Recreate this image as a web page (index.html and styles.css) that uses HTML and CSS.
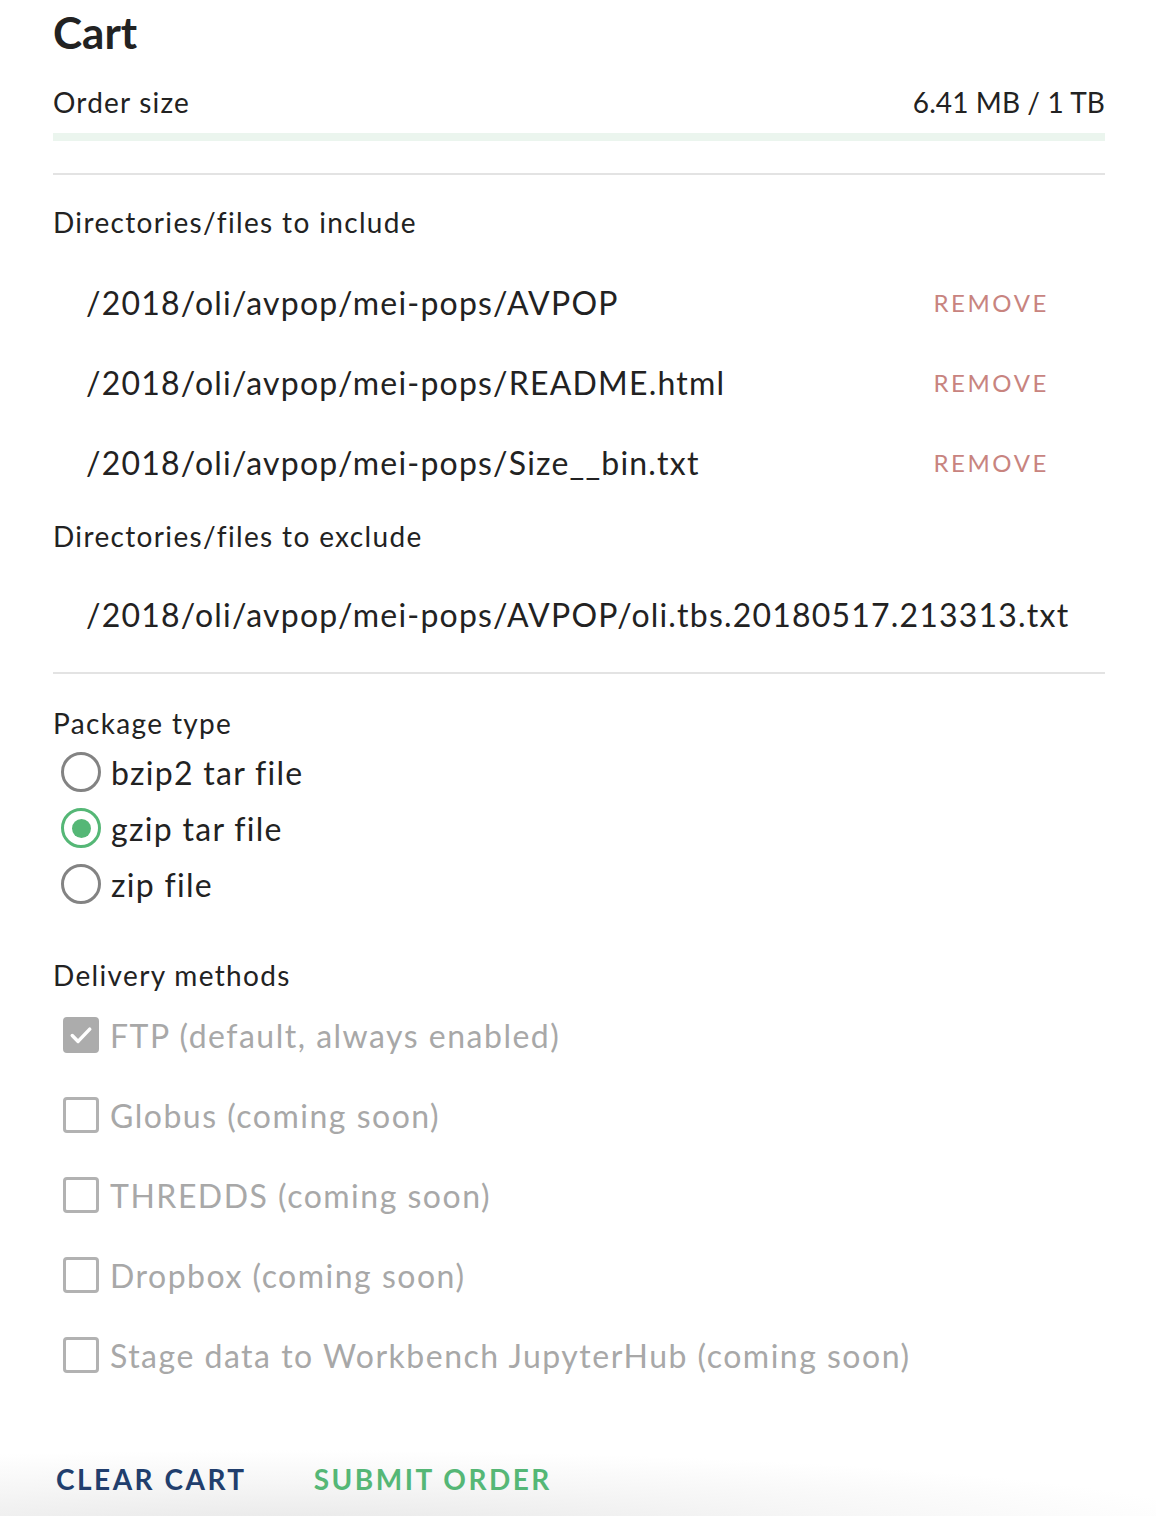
FILE: index.html
```html
<!DOCTYPE html>
<html lang="en">
<head>
<meta charset="utf-8">
<title>Cart</title>
<link rel="stylesheet" href="styles.css">
</head>
<body>
<div class="cart">
  <h1 class="title">Cart</h1>
  <div class="order-row">
    <span class="order-label">Order size</span>
    <span class="order-value">6.41 MB / 1 TB</span>
  </div>
  <div class="progress"><div class="progress-fill" style="width:0%"></div></div>
  <hr class="divider first">

  <div class="label include-label">Directories/files to include</div>
  <ul class="paths">
    <li class="path-row"><span class="path">/2018/oli/avpop/mei-pops/AVPOP</span><button class="remove">REMOVE</button></li>
    <li class="path-row"><span class="path">/2018/oli/avpop/mei-pops/README.html</span><button class="remove">REMOVE</button></li>
    <li class="path-row"><span class="path">/2018/oli/avpop/mei-pops/Size__bin.txt</span><button class="remove">REMOVE</button></li>
  </ul>
  <div class="label exclude-label">Directories/files to exclude</div>
  <ul class="paths exclude">
    <li class="path-row"><span class="path">/2018/oli/avpop/mei-pops/AVPOP/oli.tbs.20180517.213313.txt</span></li>
  </ul>
  <hr class="divider second">

  <div class="label package-label">Package type</div>
  <div class="radios">
    <label class="radio-row"><span class="radio"></span><span>bzip2 tar file</span></label>
    <label class="radio-row"><span class="radio checked"></span><span>gzip tar file</span></label>
    <label class="radio-row"><span class="radio"></span><span>zip file</span></label>
  </div>

  <div class="label delivery-label">Delivery methods</div>
  <div class="checks">
    <label class="check-row"><span class="box checked"><svg viewBox="0 0 24 24" width="28" height="28"><path d="M4.5 12.5l5 5L19.5 7" fill="none" stroke="#fff" stroke-width="3" stroke-linecap="round" stroke-linejoin="round"/></svg></span><span>FTP (default, always enabled)</span></label>
    <label class="check-row"><span class="box"></span><span>Globus (coming soon)</span></label>
    <label class="check-row"><span class="box"></span><span>THREDDS (coming soon)</span></label>
    <label class="check-row"><span class="box"></span><span>Dropbox (coming soon)</span></label>
    <label class="check-row"><span class="box"></span><span>Stage data to Workbench JupyterHub (coming soon)</span></label>
  </div>

  <div class="actions">
    <button class="btn clear">CLEAR CART</button>
    <button class="btn submit">SUBMIT ORDER</button>
  </div>
</div>
<div class="shade"></div>
</body>
</html>
```
FILE: styles.css
```css
html, body {
  margin: 0;
  padding: 0;
  background: #fff;
}
body {
  font-family: Lato, "Noto Sans", sans-serif;
  color: #222;
  width: 1156px;
  height: 1516px;
  overflow: hidden;
  position: relative;
}
.cart {
  padding: 0 51px 0 53px;
  position: relative;
  z-index: 1;
}
.title {
  margin: 0;
  font-size: 44px;
  font-weight: 700;
  line-height: 64px;
  height: 64px;
  letter-spacing: 0;
}
.order-row {
  margin-top: 18px;
  height: 40px;
  line-height: 40px;
  font-size: 28px;
  display: flex;
  justify-content: space-between;
}
.order-label { letter-spacing: 1.2px; }
.order-value { letter-spacing: 0.1px; }
.progress {
  margin-top: 11px;
  height: 8px;
  background: #ebf5ee;
}
.progress-fill {
  height: 100%;
  background: #55b776;
}
.divider {
  border: 0;
  height: 2px;
  background: #e3e3e3;
  margin: 0;
}
.divider.first { margin-top: 32px; }
.divider.second { margin-top: 18px; }
.label {
  font-size: 28px;
  height: 40px;
  line-height: 40px;
  letter-spacing: 1.35px;
}
.include-label { margin-top: 27px; }
.exclude-label { margin-top: 14px; }
.package-label { margin-top: 29px; }
.delivery-label { margin-top: 43px; }
.paths {
  list-style: none;
  margin: 20px 0 0;
  padding: 0;
}
.paths.exclude { margin-top: 18px; }
.path-row {
  height: 80px;
  display: flex;
  align-items: center;
  justify-content: space-between;
  padding: 0 58px 0 33px;
}
.paths.exclude .path-row {
  padding-right: 0;
}
.path {
  font-size: 32px;
  letter-spacing: 1.2px;
  white-space: nowrap;
}
.remove {
  border: 0;
  background: none;
  padding: 0;
  font-family: inherit;
  font-size: 24px;
  letter-spacing: 2.6px;
  color: #c8847f;
  margin-right: -2px;
}
.radios {
  margin-top: 1px;
}
.radio-row {
  height: 56px;
  display: flex;
  align-items: center;
  font-size: 32px;
  letter-spacing: 1.3px;
  padding-left: 8px;
}
.radio {
  width: 34px;
  height: 34px;
  border: 3px solid #838383;
  border-radius: 50%;
  margin-right: 10px;
  box-sizing: content-box;
  display: flex;
  align-items: center;
  justify-content: center;
}
.radio.checked {
  border-color: #55b776;
}
.radio.checked::after {
  content: "";
  width: 19px;
  height: 19px;
  border-radius: 50%;
  background: #55b776;
}
.check-row {
  height: 80px;
  display: flex;
  align-items: center;
  font-size: 32px;
  letter-spacing: 1.5px;
  color: #a8a8a8;
  padding-left: 10px;
}
.box {
  width: 30px;
  height: 30px;
  border: 3px solid #b2b2b2;
  border-radius: 4px;
  margin-right: 11px;
  display: flex;
  align-items: center;
  justify-content: center;
  flex: none;
}
.box.checked {
  background: #acacac;
  border-color: #acacac;
}
.actions {
  margin-top: 54px;
  height: 60px;
  display: flex;
  align-items: center;
  gap: 67px;
  padding-left: 3px;
}
.btn {
  border: 0;
  background: none;
  padding: 0;
  font-family: inherit;
  font-size: 28px;
  font-weight: 700;
  letter-spacing: 2.5px;
}
.btn.clear { color: #213e6d; }
.btn.submit { color: #55b776; }
.shade {
  position: absolute;
  left: 0;
  right: 0;
  bottom: 0;
  height: 110px;
  background: radial-gradient(ellipse 110% 100% at 25% 115%, #e6e6e6 0%, rgba(240,240,240,0.6) 45%, rgba(255,255,255,0) 75%);
  z-index: 0;
}
```
